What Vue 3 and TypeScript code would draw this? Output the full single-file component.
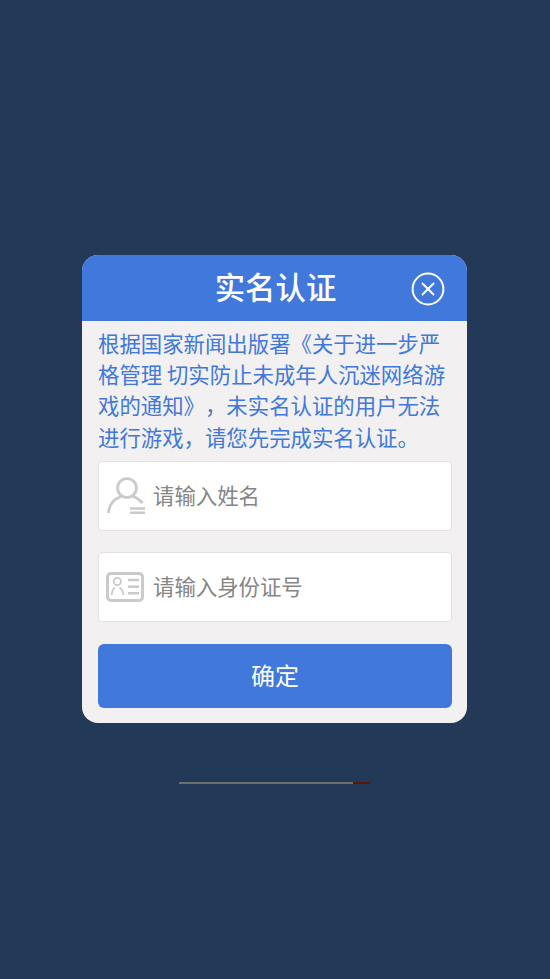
<script setup lang="ts">
const notice = '根据国家新闻出版署《关于进一步严格管理 切实防止未成年人沉迷网络游戏的通知》，未实名认证的用户无法进行游戏，请您先完成实名认证。'
</script>

<template>
  <div class="page">
    <section class="dialog">
      <header class="head">
        <h1 class="title">实名认证</h1>
        <button class="close" type="button" aria-label="关闭">
          <svg viewBox="0 0 34 34" width="34" height="34" fill="none" stroke="#fff">
            <circle cx="17" cy="17" r="15.4" stroke-width="2" />
            <path d="M11 11 23 23M23 11 11 23" stroke-width="2" />
          </svg>
        </button>
      </header>
      <div class="body">
        <p class="notice">{{ notice }}</p>
        <label class="field first">
          <svg class="icon" viewBox="0 0 40 40" width="40" height="40" fill="none" stroke="#cacaca" stroke-width="2.8">
            <circle cx="21" cy="12" r="9.4" />
            <path d="M2.5 37C3 28 8 23 15 20.5M26.5 20C30 21.5 34 24 36.5 27" />
            <path d="M24 32.5H39M24 36.8H39" stroke-width="2.4" />
          </svg>
          <input class="input" type="text" placeholder="请输入姓名" />
        </label>
        <label class="field">
          <svg class="icon" viewBox="0 0 40 40" width="40" height="40" fill="none" stroke="#cacaca">
            <rect x="1.5" y="6.5" width="35" height="27" rx="3.5" stroke-width="3" />
            <circle cx="11.3" cy="14.5" r="3.6" stroke-width="1.8" />
            <path d="M5.7 28C6 23.5 7.5 21.5 9 20.5M13.5 20.5C15 21.5 17 23.5 17.3 28" stroke-width="1.8" />
            <path d="M22 13H33M22 19.7H33M22 26.3H33" stroke-width="2.4" />
          </svg>
          <input class="input" type="text" placeholder="请输入身份证号" />
        </label>
        <button class="confirm" type="button">确定</button>
      </div>
    </section>
    <div class="progress"><div class="progress-fill"></div></div>
  </div>
</template>

<style>
html,
body {
  margin: 0;
  background: #223957;
}
</style>

<style scoped>
.page {
  box-sizing: border-box;
  height: 979px;
  padding: 255px 1px 0 0;
  display: flex;
  flex-direction: column;
  align-items: center;
  background: #223957;
  font-family: "Noto Sans CJK SC", "Noto Sans", sans-serif;
  text-spacing-trim: space-all;
}
.dialog {
  width: 385px;
  height: 468px;
  border-radius: 16px;
  overflow: hidden;
  background: #f3f0f1;
  display: flex;
  flex-direction: column;
}
.head {
  position: relative;
  flex: none;
  height: 66px;
  background: #4078db;
  display: flex;
  align-items: center;
  justify-content: center;
}
.title {
  margin: 0;
  padding: 0 0 4px 2px;
  color: #fff;
  font-size: 30.4px;
  font-weight: 500;
  line-height: 62px;
}
.close {
  position: absolute;
  right: 22px;
  top: 16.5px;
  width: 34px;
  height: 34px;
  padding: 0;
  border: 0;
  background: none;
  display: block;
}
.close svg {
  display: block;
}
.body {
  flex: 1;
  padding: 5.5px 15px 15px 16px;
  display: flex;
  flex-direction: column;
}
.notice {
  margin: 0;
  color: #4078db;
  font-size: 21.4px;
  line-height: 31.4px;
}
.field {
  box-sizing: border-box;
  flex: none;
  height: 70px;
  margin-top: 21px;
  padding-left: 7px;
  display: flex;
  align-items: center;
  gap: 7px;
  background: #fff;
  border: 1px solid #e1e1e1;
  border-radius: 4px;
}
.field.first {
  margin-top: 8.5px;
}
.icon {
  flex: none;
}
.input {
  flex: 1;
  min-width: 0;
  padding: 0 0 2px;
  border: 0;
  outline: 0;
  background: transparent;
  color: #333;
  font-family: inherit;
  font-size: 21.4px;
}
.input::placeholder {
  color: #858585;
  opacity: 1;
}
.confirm {
  flex: none;
  height: 64px;
  margin-top: 22px;
  padding: 0 0 2px;
  border: 0;
  border-radius: 6px;
  background: #4078db;
  color: #fff;
  font-family: inherit;
  font-size: 24px;
}
.progress {
  width: 191px;
  height: 2px;
  margin-top: 59px;
  background: #5a1408;
}
.progress-fill {
  width: 174px;
  height: 100%;
  background: #6b6f6b;
}
</style>
